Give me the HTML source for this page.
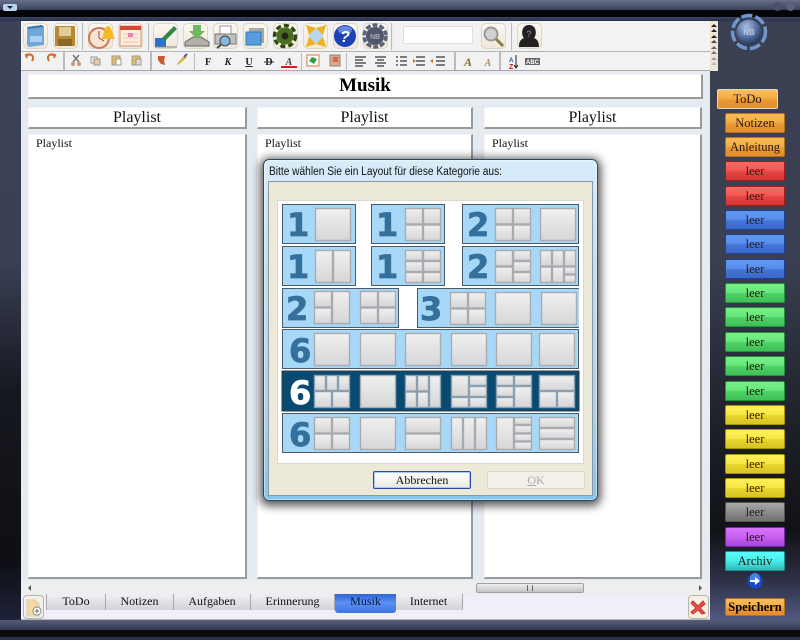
<!DOCTYPE html>
<html><head><meta charset="utf-8"><style>
html,body{margin:0;padding:0;width:800px;height:640px;overflow:hidden;background:#222;font-family:"Liberation Serif",serif;color:#111}
div{position:absolute;box-sizing:border-box}
#w{left:0;top:0;width:800px;height:640px;overflow:hidden;filter:blur(.35px)}
.box{background:#fff;border-right:2px solid #9a9a9a;border-bottom:2px solid #9a9a9a;border-top:1px solid #f4f4f4;border-left:1px solid #f4f4f4}
.hd{font-size:16px;text-align:center;line-height:19px;height:22px;top:107px}
.pn{top:134px;height:445px;font-size:12px;padding:1px 0 0 7px;line-height:15px}
.b{left:725px;width:60px;height:20px;border-radius:2px;font-size:12.5px;line-height:19px;text-align:center;border:1px solid;color:#2a1a10}
.o{background:linear-gradient(#fbbc58,#f4ae48 45%,#ea9836 55%,#e48e2e);border-color:#b8701c}
.r{background:linear-gradient(#fa6a64,#f45a54 45%,#e44444 55%,#d63434);border-color:#a81c1c}
.u{background:linear-gradient(#6098f0,#5a8eec 45%,#4474d8 55%,#3a68c8);border-color:#1c409c}
.g{background:linear-gradient(#78f088,#68e87c 45%,#4cd064 55%,#40c058);border-color:#20943c}
.y{background:linear-gradient(#fff058,#f8e848 45%,#e8d42c 55%,#d8c424);border-color:#a89410}
.tab{top:594px;height:16px;font-size:12px;line-height:14px;text-align:center;border-right:1px solid #a8a8b0;background:linear-gradient(#f0f0f3,#d2d4da)}
.sb{width:25px;height:26px;top:23px;border-radius:5px;border:1px solid #e0d6c2;background:linear-gradient(#fbf8f0,#efe8d8)}
.sp{width:2px;background:#bbb;border-right:1px solid #eee}
</style></head><body><div id="w">
<div style="left:0;top:0;width:800px;height:10px;background:linear-gradient(#666e88,#3c425c)"></div>
<div style="left:0;top:10px;width:800px;height:7px;background:#060608"></div>
<div style="left:0;top:17px;width:800px;height:4px;background:linear-gradient(#3c4468,#2a3048)"></div>
<div style="left:3px;top:4px;width:14px;height:7px;background:#b8d4ec;border-radius:2px"></div>
<svg style="position:absolute;left:7px;top:6px" width="6" height="4"><path d="M0 0h6l-3 3z" fill="#123"/></svg>
<div style="left:773px;top:2px;width:9px;height:9px;border-radius:50%;background:#4c5264"></div>
<div style="left:786px;top:2px;width:9px;height:9px;border-radius:50%;background:#5c6274"></div>
<div style="left:0;top:21px;width:21px;height:599px;background:linear-gradient(#3c4258 0,#3a4056 40%,#16181f 62%,#0e0f14 90%,#1e2238 100%)"></div>
<div style="left:710px;top:21px;width:90px;height:599px;background:linear-gradient(#3a4052 0,#3a4052 40%,#1c1e26 70%,#111216 85%,#2c2e44 93%,#505880 100%)"></div>
<div style="left:21px;top:71px;width:689px;height:524px;background:#e6ebf2"></div>
<div style="left:21px;top:21px;width:689px;height:31px;background:#f2f2f2;border-bottom:1px solid #b4b4b4"></div>
<div style="left:21px;top:52px;width:689px;height:19px;background:#f2f2f2;border-bottom:1px solid #a8a8a8"></div>
<div style="left:710px;top:21px;width:8px;height:50px;background:#ece6d2"></div>
<svg style="position:absolute;left:710px;top:21px" width="8" height="50"><g fill="#222"><path d="M1 6h6l-3-3z"/><path d="M1 11h6l-3-3z"/><path d="M1 17h6l-3-3z"/><path d="M1 22h6l-3-3z" fill="#444"/><path d="M1 28h6l-3-3z" fill="#666"/><path d="M1 33h6l-3-3z" fill="#777"/><path d="M1 39h6l-3-3z" fill="#999"/><path d="M1 44h6l-3-3z" fill="#bbb"/></g></svg>

<div class="sb" style="left:23px"></div><div class="sb" style="left:53px"></div><div class="sb" style="left:88px"></div><div class="sb" style="left:118px"></div><div class="sb" style="left:153px"></div><div class="sb" style="left:183px"></div><div class="sb" style="left:213px"></div><div class="sb" style="left:243px"></div><div class="sb" style="left:273px"></div><div class="sb" style="left:303px"></div><div class="sb" style="left:333px"></div><div class="sb" style="left:363px"></div><div class="sb" style="left:481px"></div><div class="sb" style="left:517px"></div>
<div class="sp" style="left:82px;top:23px;height:27px"></div><div class="sp" style="left:148px;top:23px;height:27px"></div><div class="sp" style="left:391px;top:23px;height:27px"></div><div class="sp" style="left:511px;top:23px;height:27px"></div>
<div style="left:403px;top:26px;width:70px;height:18px;background:#fff;border:1px solid #e0e0e0"></div>
<svg style="position:absolute;left:21px;top:21px" width="689" height="50">
<path d="M6 6l15-2 2 2v18l-15 2-2-2z" fill="#6ea8d8"/><path d="M6 6l15-2 2 2-15 2z" fill="#3c78b0"/><rect x="9" y="15" width="12" height="6" fill="#a8d0f0"/>
<rect x="34" y="5" width="20" height="20" rx="1" fill="#b88830"/><rect x="38" y="6" width="12" height="9" fill="#e0cc98"/><rect x="37" y="18" width="14" height="7" fill="#8a6824"/>
<circle cx="78" cy="17" r="10" fill="#f8e4d4" stroke="#c87858" stroke-width="2"/><path d="M78 17V10M78 17l5 3" stroke="#a04030" stroke-width="1"/><path d="M81 18c1-2 2-13 6-13s5 11 7 13z" fill="#f8b820"/>
<rect x="99" y="5" width="21" height="20" fill="#fbeedd" stroke="#d89070"/><rect x="99" y="5" width="21" height="4" fill="#d84838"/><path d="M102 13h15M102 17h15M102 21h15" stroke="#e8c8b0"/><rect x="107" y="12" width="5" height="4" fill="#e880b0"/>
<rect x="134" y="17" width="11" height="9" fill="#2c70d0"/><path d="M141 17l12-12 3 3-12 12z" fill="#308848"/><path d="M134 26h22" stroke="#888"/>
<path d="M164 21l8-5h8l8 5v4h-24z" fill="#b0b0a8" stroke="#666"/><path d="M172 4h8v6h4l-8 8-8-8h4z" fill="#70b860"/>
<path d="M199 5h11v8h-11z" fill="#fff" stroke="#999"/><path d="M194 13h21v10h-21z" fill="#c0c0c0" stroke="#777"/><circle cx="204" cy="20" r="5" fill="#80b8e0" stroke="#444"/><path d="M200 24l-4 3" stroke="#444" stroke-width="2"/>
<rect x="228" y="7" width="15" height="15" fill="#a8a8a8"/><rect x="225" y="11" width="15" height="13" fill="#5a9ce0" stroke="#37b"/>
<circle cx="264" cy="15" r="8.5" fill="#4a6e1c"/><circle cx="264" cy="15" r="10.5" fill="none" stroke="#2e4810" stroke-width="3.5" stroke-dasharray="5 3"/><circle cx="264" cy="15" r="3.5" fill="#222"/>
<rect x="288" y="8" width="14" height="14" fill="#b8d8f0"/><path d="M285 4l10 3-7 7zM305 4l-10 3 7 7zM285 26l10-3-7-7zM305 26l-10-3 7-7z" fill="#f0b020"/>
<circle cx="324" cy="15" r="11" fill="#1c40b8"/><ellipse cx="324" cy="9" rx="7" ry="4" fill="#6888e0"/><text x="324" y="21" font-family="Liberation Sans" font-weight="bold" font-style="italic" font-size="16" fill="#fff" text-anchor="middle">?</text>
<circle cx="354" cy="15" r="9" fill="#50566c"/><circle cx="354" cy="15" r="11" fill="none" stroke="#5c6278" stroke-width="3.5" stroke-dasharray="5 2"/><text x="354" y="18" font-family="Liberation Sans" font-weight="bold" font-size="7" fill="#aab" text-anchor="middle">NB</text>
<circle cx="470" cy="13" r="6.5" fill="#d0d0d0" stroke="#999" stroke-width="2"/><path d="M475 18l7 7" stroke="#8a7a50" stroke-width="3"/>
<path d="M498 26c0-7 3-8 5-9-3-3-3-13 5-13s8 10 5 13c2 1 5 2 5 9z" fill="#222"/><text x="508" y="16" font-family="Liberation Sans" font-weight="bold" font-size="9" fill="#777" text-anchor="middle">?</text>
<!-- small toolbar -->
<g fill="none" stroke="#d86a28" stroke-width="2"><path d="M6 37l-1-3 3 0M5 34c5-2 9 1 6 6"/><path d="M33 37l1-3-3 0M34 34c-5-2-9 1-6 6"/></g>
<g fill="#bbb"><rect x="42" y="31" width="2" height="18"/><rect x="129" y="31" width="2" height="18"/><rect x="173" y="32" width="1" height="17"/><rect x="280" y="32" width="1" height="17"/><rect x="325" y="32" width="1" height="17"/><rect x="433" y="31" width="2" height="18"/><rect x="478" y="31" width="2" height="18"/></g>
<path d="M52 34l6 7M58 34l-6 7" stroke="#777" stroke-width="1.5"/><circle cx="52" cy="43" r="2" fill="#c89878"/><circle cx="58" cy="43" r="2" fill="#c89878"/>
<g stroke="#999"><rect x="70" y="36" width="6" height="6" fill="#eee"/><rect x="73" y="38" width="6" height="6" fill="#e8c8a0"/><rect x="91" y="35" width="8" height="9" fill="#e0c060"/><rect x="95" y="38" width="5" height="6" fill="#fff"/><rect x="111" y="35" width="8" height="9" fill="#e0c060"/><rect x="115" y="38" width="5" height="6" fill="#ddd"/></g>
<path d="M137 35h7l-1 5 1 4-4-1-3-4z" fill="#c85c30"/><path d="M156 43l4-5 4-4 2 2-4 4-5 4z" fill="#e0b840"/><path d="M166 33l-3 3" stroke="#55a" stroke-width="2"/>
<g font-family="Liberation Serif" font-weight="bold" font-size="10" fill="#222" text-anchor="middle"><text x="187" y="44">F</text><text x="207" y="44" font-style="italic">K</text><text x="228" y="44" text-decoration="underline">U</text><text x="248" y="44">D</text><text x="268" y="44" font-style="italic" fill="#444">A</text></g>
<path d="M243 41h10" stroke="#333"/><rect x="260" y="45" width="16" height="2" fill="#e01818"/>
<rect x="286" y="34" width="12" height="11" fill="#fff" stroke="#d87840"/><path d="M288 40l5 3 3-5-5-2z" fill="#30a040"/>
<rect x="309" y="34" width="10" height="11" fill="#d8a888" stroke="#887"/><rect x="312" y="36" width="5" height="5" fill="#e06050"/>
<g stroke="#555" stroke-width="1.4"><path d="M334 36h11M334 39h8M334 42h11M334 45h8M354 36h11M356 39h7M354 42h11M356 45h7M375 36h2M379 36h7M375 40h2M379 40h7M375 44h2M379 44h7M395 36h9M395 40h9M395 44h9M415 36h9M415 40h9M415 44h9"/></g>
<path d="M392 38l3 2-3 2zM412 38l-3 2 3 2" fill="#d87020"/>
<text x="447" y="45" font-family="Liberation Serif" font-weight="bold" font-style="italic" font-size="12" fill="#8a6a30" text-anchor="middle">A</text>
<text x="467" y="45" font-family="Liberation Serif" font-weight="bold" font-style="italic" font-size="10" fill="#a89060" text-anchor="middle">A</text>
<text x="488" y="41" font-family="Liberation Sans" font-weight="bold" font-size="6" fill="#2050c0">A</text><text x="488" y="48" font-family="Liberation Sans" font-weight="bold" font-size="7" fill="#c02020">Z</text><path d="M495 34v12M493 44l2 3 2-3" stroke="#222" fill="none"/>
<rect x="504" y="37" width="15" height="7" fill="#666"/><text x="511.5" y="43" font-family="Liberation Sans" font-weight="bold" font-size="6" fill="#fff" text-anchor="middle">ABC</text>
</svg>

<svg style="position:absolute;left:728px;top:11px" width="42" height="42">
<defs><radialGradient id="orb" cx=".4" cy=".3" r=".8"><stop offset="0" stop-color="#a8c0e8"/><stop offset=".6" stop-color="#4a6494"/><stop offset="1" stop-color="#1c2844"/></radialGradient></defs>
<circle cx="21" cy="21" r="16.5" fill="none" stroke="#7096d0" stroke-width="3.5" stroke-dasharray="11 3"/>
<circle cx="21" cy="21" r="12.5" fill="url(#orb)"/><text x="21" y="24" font-family="Liberation Sans" font-weight="bold" font-size="8" fill="#b8c8e0" text-anchor="middle">NB</text></svg>

<div class="box" style="left:28px;top:74px;width:675px;height:25px;text-align:center;font-weight:bold;font-size:19px;line-height:22px;color:#000">Musik</div>
<div class="box hd" style="left:28px;width:219px">Playlist</div><div class="box hd" style="left:257px;width:216px">Playlist</div><div class="box hd" style="left:484px;width:218px">Playlist</div>
<div class="box pn" style="left:28px;width:219px">Playlist</div><div class="box pn" style="left:257px;width:216px">Playlist</div><div class="box pn" style="left:484px;width:218px">Playlist</div>

<div style="left:21px;top:581px;width:689px;height:14px;background:#eceef0"></div>
<svg style="position:absolute;left:26px;top:584px" width="680" height="8"><path d="M5 1v6l-3-3zM673 1v6l3-3z" fill="#555"/></svg>
<div style="left:476px;top:583px;width:108px;height:10px;border:1px solid #a0a0a0;border-radius:2px;background:linear-gradient(#eeeeee,#c4c4c4)"></div>
<div style="left:527px;top:585px;width:6px;height:6px;border-left:1px solid #666;border-right:1px solid #666"></div>
<div style="left:21px;top:595px;width:689px;height:25px;background:#f0eef8"></div>
<div style="left:21px;top:619px;width:689px;height:1px;background:#b8b8c0"></div>
<div style="left:46px;top:594px;width:417px;height:16px;border:1px solid #a8a8b0;border-top:0;background:#e0e2e6"></div>
<div class="tab" style="left:47px;width:59px">ToDo</div><div class="tab" style="left:106px;width:68px">Notizen</div><div class="tab" style="left:174px;width:77px">Aufgaben</div><div class="tab" style="left:251px;width:84px">Erinnerung</div><div class="tab" style="left:395px;width:68px">Internet</div>
<div class="tab" style="left:335px;width:61px;height:19px;border-radius:0 0 3px 3px;border:0;line-height:14px;color:#051c40;background:linear-gradient(#2c64d8,#5c90f0 45%,#3e74e0)">Musik</div>
<div style="left:23px;top:595px;width:21px;height:24px;border:1px solid #b8b4a8;border-radius:4px;background:#f4f0e4"></div>
<svg style="position:absolute;left:26px;top:598px" width="16" height="19"><path d="M1 2h8l4 4v12H1z" fill="#f8d8a0" stroke="#ccc"/><circle cx="11" cy="13" r="4" fill="#fff" stroke="#888"/><path d="M11 11v4M9 13h4" stroke="#666"/></svg>
<div style="left:688px;top:595px;width:21px;height:24px;border:1px solid #b8b4a8;border-radius:4px;background:#f4f0e4"></div>
<svg style="position:absolute;left:690px;top:599px" width="17" height="16"><path d="M3 2l5 5 5-5 2 3-5 4 5 5-3 1-4-4-5 4-2-2 5-4-5-5z" fill="#e85050" stroke="#c83030"/></svg>

<div class="b o" style="left:717px;top:89px;width:61px;border-color:#d8d8d8;border-width:1px">ToDo</div>
<div class="b o" style="top:113px">Notizen</div><div class="b o" style="top:137px">Anleitung</div>
<div class="b r" style="top:161px">leer</div><div class="b r" style="top:186px">leer</div>
<div class="b u" style="top:210px">leer</div><div class="b u" style="top:234px">leer</div><div class="b u" style="top:259px">leer</div>
<div class="b g" style="top:283px">leer</div><div class="b g" style="top:307px">leer</div><div class="b g" style="top:332px">leer</div><div class="b g" style="top:356px">leer</div><div class="b g" style="top:381px">leer</div>
<div class="b y" style="top:405px">leer</div><div class="b y" style="top:429px">leer</div><div class="b y" style="top:454px">leer</div><div class="b y" style="top:478px">leer</div>
<div class="b" style="top:502px;background:linear-gradient(#a8a8a8,#8c8c8c 50%,#707070);border-color:#555">leer</div>
<div class="b" style="top:527px;background:linear-gradient(#d874fc,#c860f0 50%,#a844dc);border-color:#7828a8">leer</div>
<div class="b" style="top:551px;background:linear-gradient(#58fffc,#48ece8 50%,#34b8b8);border-color:#209090">Archiv</div>
<svg style="position:absolute;left:747px;top:573px" width="16" height="16"><circle cx="8" cy="8" r="7.5" fill="#1848c8"/><circle cx="8" cy="5" r="5" fill="#4c80e8"/><path d="M3 7h5V4l5 4-5 4V9H3z" fill="#fff"/></svg>
<div class="b o" style="top:598px;height:18px;font-weight:bold;line-height:16px;font-size:12.5px;color:#000">Speichern</div>
<div style="left:0;top:620px;width:800px;height:10px;background:linear-gradient(#565e78,#323850)"></div>
<div style="left:0;top:630px;width:800px;height:7px;background:#0c0c10"></div>
<div style="left:0;top:637px;width:800px;height:3px;background:#2a3050"></div>

<!-- dialog -->
<div style="left:263px;top:159px;width:335px;height:342px;border-radius:6px;border:1px solid #2e4a60;background:linear-gradient(#d8ecfa,#c4deF2 30%,#b0d4ec 70%,#84c6ee);box-shadow:0 2px 9px 3px rgba(0,0,0,.65),inset 0 0 0 1px rgba(255,255,255,.45);"></div>
<div style="left:268px;top:181px;width:325px;height:315px;background:#ece9d8;border:1px solid #8a98a4"></div>
<div style="left:277px;top:200px;width:307px;height:264px;background:#fff;border:1px solid #d8d8d0"></div>
<svg style="position:absolute;left:0;top:0" width="800" height="640">
<defs>
<linearGradient id="t" x1="0" y1="0" x2="0" y2="1"><stop offset="0" stop-color="#f0f0f0"/><stop offset="1" stop-color="#d6d6d8"/></linearGradient>
<symbol id="a" width="36" height="33" overflow="visible"><rect x=".5" y=".5" width="35" height="32" fill="url(#t)" stroke="#a8acb0" stroke-width="1.4"/></symbol>
<symbol id="q" width="36" height="33" overflow="visible"><g fill="url(#t)" stroke="#a8acb0" stroke-width="1.4"><rect x=".5" y=".5" width="17" height="15.5"/><rect x="18.5" y=".5" width="17" height="15.5"/><rect x=".5" y="17" width="17" height="15.5"/><rect x="18.5" y="17" width="17" height="15.5"/></g></symbol>
<symbol id="c" width="36" height="33" overflow="visible"><g fill="url(#t)" stroke="#a8acb0" stroke-width="1.4"><rect x=".5" y=".5" width="17" height="32"/><rect x="18.5" y=".5" width="17" height="32"/></g></symbol>
<symbol id="s" width="36" height="33" overflow="visible"><g fill="url(#t)" stroke="#a8acb0" stroke-width="1.4"><rect x=".5" y=".5" width="17" height="10"/><rect x="18.5" y=".5" width="17" height="10"/><rect x=".5" y="11.5" width="17" height="10"/><rect x="18.5" y="11.5" width="17" height="10"/><rect x=".5" y="22.5" width="17" height="10"/><rect x="18.5" y="22.5" width="17" height="10"/></g></symbol>
<symbol id="l23" width="36" height="33" overflow="visible"><g fill="url(#t)" stroke="#a8acb0" stroke-width="1.4"><rect x=".5" y=".5" width="17" height="15.5"/><rect x=".5" y="17" width="17" height="15.5"/><rect x="18.5" y=".5" width="17" height="10"/><rect x="18.5" y="11.5" width="17" height="10"/><rect x="18.5" y="22.5" width="17" height="10"/></g></symbol>
<symbol id="k" width="36" height="33" overflow="visible"><g fill="url(#t)" stroke="#a8acb0" stroke-width="1.4"><rect x=".5" y=".5" width="11" height="15.5"/><rect x="12.5" y=".5" width="11" height="15.5"/><rect x="24.5" y=".5" width="11" height="15.5"/><rect x=".5" y="17" width="11" height="15.5"/><rect x="12.5" y="17" width="11" height="15.5"/><rect x="24.5" y="17" width="11" height="7"/><rect x="24.5" y="25" width="11" height="7.5"/></g></symbol>
<symbol id="lt" width="36" height="33" overflow="visible"><g fill="url(#t)" stroke="#a8acb0" stroke-width="1.4"><rect x=".5" y=".5" width="17" height="15.5"/><rect x=".5" y="17" width="17" height="15.5"/><rect x="18.5" y=".5" width="17" height="32"/></g></symbol>
<symbol id="d1" width="36" height="33" overflow="visible"><g fill="url(#t)" stroke="#8aa0b0" stroke-width="1.4"><rect x=".5" y=".5" width="11" height="15"/><rect x="12.5" y=".5" width="11" height="15"/><rect x="24.5" y=".5" width="11" height="15"/><rect x=".5" y="16.5" width="17" height="16"/><rect x="18.5" y="16.5" width="17" height="16"/></g></symbol>
<symbol id="d3" width="36" height="33" overflow="visible"><g fill="url(#t)" stroke="#8aa0b0" stroke-width="1.4"><rect x=".5" y=".5" width="11" height="15.5"/><rect x="12.5" y=".5" width="11" height="15.5"/><rect x=".5" y="17" width="11" height="15.5"/><rect x="12.5" y="17" width="11" height="15.5"/><rect x="24.5" y=".5" width="11" height="32"/></g></symbol>
<symbol id="d4" width="36" height="33" overflow="visible"><g fill="url(#t)" stroke="#8aa0b0" stroke-width="1.4"><rect x=".5" y=".5" width="17" height="21"/><rect x="18.5" y=".5" width="17" height="10"/><rect x="18.5" y="11.5" width="17" height="10"/><rect x=".5" y="22.5" width="17" height="10"/><rect x="18.5" y="22.5" width="17" height="10"/></g></symbol>
<symbol id="d5" width="36" height="33" overflow="visible"><g fill="url(#t)" stroke="#8aa0b0" stroke-width="1.4"><rect x=".5" y=".5" width="17" height="10"/><rect x="18.5" y=".5" width="17" height="10"/><rect x=".5" y="11.5" width="17" height="10"/><rect x=".5" y="22.5" width="17" height="10"/><rect x="18.5" y="11.5" width="17" height="21"/></g></symbol>
<symbol id="d6" width="36" height="33" overflow="visible"><g fill="url(#t)" stroke="#8aa0b0" stroke-width="1.4"><rect x=".5" y=".5" width="35" height="15"/><rect x=".5" y="16.5" width="17" height="16"/><rect x="18.5" y="16.5" width="17" height="16"/></g></symbol>
<symbol id="two" width="36" height="33" overflow="visible"><g fill="url(#t)" stroke="#a8acb0" stroke-width="1.4"><rect x=".5" y=".5" width="35" height="15.5"/><rect x=".5" y="17" width="35" height="15.5"/></g></symbol>
<symbol id="col3" width="36" height="33" overflow="visible"><g fill="url(#t)" stroke="#a8acb0" stroke-width="1.4"><rect x=".5" y=".5" width="11" height="32"/><rect x="12.5" y=".5" width="11" height="32"/><rect x="24.5" y=".5" width="11" height="32"/></g></symbol>
<symbol id="l4" width="36" height="33" overflow="visible"><g fill="url(#t)" stroke="#a8acb0" stroke-width="1.4"><rect x=".5" y=".5" width="17" height="32"/><rect x="18.5" y=".5" width="17" height="7"/><rect x="18.5" y="8.5" width="17" height="7.5"/><rect x="18.5" y="17" width="17" height="7"/><rect x="18.5" y="25" width="17" height="7.5"/></g></symbol>
<symbol id="r3" width="36" height="33" overflow="visible"><g fill="url(#t)" stroke="#a8acb0" stroke-width="1.4"><rect x=".5" y=".5" width="35" height="10"/><rect x=".5" y="11.5" width="35" height="10"/><rect x=".5" y="22.5" width="35" height="10"/></g></symbol>
</defs>
<text x="269" y="175" font-family="'Liberation Sans',sans-serif" font-size="11.5" fill="#111" textLength="233" lengthAdjust="spacingAndGlyphs">Bitte wählen Sie ein Layout für diese Kategorie aus:</text>
<g fill="#a8d8f8" stroke="#4a5a68">
<rect x="282.5" y="204.5" width="73" height="39"/><rect x="371.5" y="204.5" width="73" height="39"/><rect x="462.5" y="204.5" width="116" height="39"/>
<rect x="282.5" y="246.5" width="73" height="39"/><rect x="371.5" y="246.5" width="73" height="39"/><rect x="462.5" y="246.5" width="116" height="39"/>
<rect x="282.5" y="288.5" width="116" height="39"/><path d="M579 288.5H417.5v39H579"/>
<rect x="282.5" y="329.5" width="296" height="39"/>
<rect x="282.5" y="413.5" width="296" height="39"/>
</g>
<rect x="282" y="371" width="297" height="40" fill="#0a4a70" stroke="#2a3a48"/>
<g font-family="'DejaVu Sans',sans-serif" font-weight="bold" font-size="32" fill="#34709c" stroke="#34709c" stroke-width=".8">
<text x="287" y="236">1</text><text x="376" y="236">1</text><text x="467" y="236">2</text>
<text x="287" y="278">1</text><text x="376" y="278">1</text><text x="467" y="278">2</text>
<text x="286" y="320">2</text><text x="420" y="320">3</text>
<text x="289" y="362">6</text><text x="289" y="446">6</text>
<text x="289" y="404" fill="#fff" stroke="#fff">6</text></g>
<use href="#a" x="315" y="208"/><use href="#q" x="405" y="208"/><use href="#q" x="495" y="208"/><use href="#a" x="540" y="208"/>
<use href="#c" x="315" y="250"/><use href="#s" x="405" y="250"/><use href="#l23" x="495" y="250"/><use href="#k" x="540" y="250"/>
<use href="#lt" x="314" y="291"/><use href="#q" x="360" y="291"/><use href="#q" x="450" y="292"/><use href="#a" x="495" y="292"/><use href="#a" x="541" y="292"/>
<use href="#a" x="314" y="333"/><use href="#a" x="360" y="333"/><use href="#a" x="405" y="333"/><use href="#a" x="451" y="333"/><use href="#a" x="496" y="333"/><use href="#a" x="539" y="333"/>
<use href="#d1" x="314" y="375"/><use href="#a" x="360" y="375"/><use href="#d3" x="405" y="375"/><use href="#d4" x="451" y="375"/><use href="#d5" x="496" y="375"/><use href="#d6" x="539" y="375"/>
<use href="#q" x="314" y="417"/><use href="#a" x="360" y="417"/><use href="#two" x="405" y="417"/><use href="#col3" x="451" y="417"/><use href="#l4" x="496" y="417"/><use href="#r3" x="539" y="417"/>
</svg>
<div style="left:373px;top:471px;width:98px;height:18px;border:1px solid #2a4aa8;border-radius:2px;box-shadow:inset 0 0 0 1px #a8c8f0;background:linear-gradient(#fff,#ece9e0);font-size:12px;line-height:16px;text-align:center">Abbrechen</div>
<div style="left:487px;top:471px;width:98px;height:18px;border:1px solid #d8d6cc;border-radius:2px;background:#f2f0e8;font-size:12px;line-height:16px;text-align:center;color:#aaa"><u>O</u>K</div>
</div></body></html>
